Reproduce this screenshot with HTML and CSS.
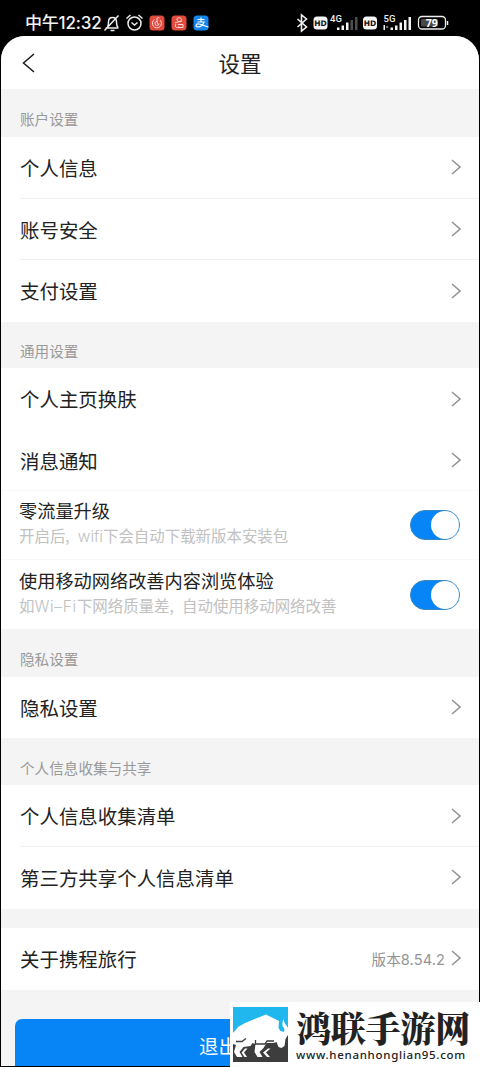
FILE: index.html
```html
<!DOCTYPE html>
<html lang="zh-CN">
<head>
<meta charset="utf-8">
<title>设置</title>
<link rel="stylesheet" href="styles.css">
</head>
<body>
<svg class="defs" width="0" height="0">
  <symbol id="chev" viewBox="0 0 10 16"><path d="M1 1l8 7-8 7" fill="none" stroke="#949494" stroke-width="1.6"/></symbol>
</svg>
<div class="phone">
  <div class="status">
    <span class="time">中午12:32</span>
    <svg class="icons-left" width="110" height="20" viewBox="0 0 110 20" fill="none">
      <g stroke="#eee" stroke-width="1.5">
        <path d="M2.500 15h13M4.500 14c1-2 1-3 1-5 0-3 1.500-4.500 4-4.500s4 1.500 4 4.500c0 2 0 4 1.500 5.500M7.500 17.500h4M1.500 17.500L15.500 2.500"/>
        <circle cx="31.500" cy="10.500" r="6.500"/>
        <path d="M28.500 9.500l3 2.500 3-2.500M23.500 5.500l4-3.500M39.500 5.500l-4-3.500"/>
      </g>
      <rect x="46.500" y="2.500" width="15" height="15" rx="3.500" fill="#e34a3e"/>
      <path d="M51.500 6.500a4.500 4.500 0 1 0 5.500.5M56.500 5c-2-1-3 0-2.500 2l.5 4M54.500 8.500a2 2 0 1 0 1.500 2" stroke="#f9d8d5"/>
      <rect x="68.500" y="2.500" width="15" height="15" rx="3.500" fill="#e34a3e"/>
      <path d="M74 5.500c2-1.500 5-.5 4.500 1.500s-4 2-4.500 0zM72 10c2-1 4-1 7-2M73 11c-2 3 1 5 3 2.500M75 11.500h5v3h-5" stroke="#f9d8d5"/>
      <rect x="90.500" y="2.500" width="15" height="15" rx="3.500" fill="#1685ec"/>
      <path d="M94.500 6.500h7M98 4.500v4.500M94.500 9h6.500c-1 3-3.500 5-6 5-3 0-2.500-3.500 1-3 3 .5 5 2 9.500 3" stroke="#fff" stroke-width="1.200"/>
    </svg>
    <svg class="icons-right" width="156" height="20" viewBox="0 0 156 20" fill="none">
      <path d="M1.500 6l9 8-5 4V2l5 4-9 8" stroke="#eee" stroke-width="1.600"/>
      <g fill="#f4f4f4">
        <rect x="17.500" y="3.500" width="14" height="13" rx="3.500"/>
        <rect x="67" y="3.500" width="14" height="13" rx="3.500"/>
        <path d="M41 14.500h2.500v2.500H41zM45.500 12.500H48V17h-2.500zM50 9.500h2.500V17H50z"/>
        <path d="M94.500 14.500H97V17h-2.500zM99 12.500h2.500V17H99zM103.500 9.500h2.500V17h-2.500zM108 7h2.500v10H108zM112.500 4h2.500v13h-2.500zM87.500 12H89v5h-1.500zM90.500 13l2 1-2 1z"/>
      </g>
      <path d="M54.500 7H57v10h-2.500zM59 4h2.500v13H59z" fill="#4e4e4e"/>
      <g class="hd"><text x="24.500" y="12.600">HD</text><text x="74" y="12.600">HD</text></g>
      <g class="net"><text x="34" y="8.500">4G</text><text x="87.500" y="8.500">5G</text></g>
      <rect x="122.500" y="3.500" width="27" height="12.500" rx="3.500" stroke="#eee" stroke-width="1.300"/>
      <rect x="125" y="6" width="17" height="7.500" rx="1" fill="#484848"/>
      <path d="M151.500 8v4" stroke="#eee" stroke-width="1.500"/>
      <text class="level" x="135.800" y="13.600">79</text>
    </svg>
  </div>
  <main class="screen">
    <header class="header">
      <svg class="back" width="14" height="20" viewBox="0 0 14 20"><path d="M13 1L2.500 10 13 19" fill="none" stroke="#1a1a1a" stroke-width="1.500"/></svg>
      <h1 class="title">设置</h1>
    </header>
    <h2 class="label">账户设置</h2>
    <section class="group">
      <div class="row line">个人信息<svg class="chev"><use href="#chev"/></svg></div>
      <div class="row line">账号安全<svg class="chev"><use href="#chev"/></svg></div>
      <div class="row">支付设置<svg class="chev"><use href="#chev"/></svg></div>
    </section>
    <h2 class="label label-short">通用设置</h2>
    <section class="group">
      <div class="row level-row">个人主页换肤<svg class="chev"><use href="#chev"/></svg></div>
      <div class="row level-row faint">消息通知<svg class="chev"><use href="#chev"/></svg></div>
      <div class="toggle-row faint">
        <div class="copy"><p class="name">零流量升级</p><p class="desc">开启后<span class="comma">,</span><span class="latin">wifi</span>下会自动下载新版本安装包</p></div>
        <span class="switch"><i class="knob"></i></span>
      </div>
      <div class="toggle-row">
        <div class="copy"><p class="name">使用移动网络改善内容浏览体验</p><p class="desc">如<span class="latin wide">Wi–Fi</span>下网络质量差<span class="comma">,</span>自动使用移动网络改善</p></div>
        <span class="switch"><i class="knob"></i></span>
      </div>
    </section>
    <h2 class="label">隐私设置</h2>
    <section class="group">
      <div class="row row-short">隐私设置<svg class="chev"><use href="#chev"/></svg></div>
    </section>
    <h2 class="label label-long">个人信息收集与共享</h2>
    <section class="group">
      <div class="row line">个人信息收集清单<svg class="chev"><use href="#chev"/></svg></div>
      <div class="row">第三方共享个人信息清单<svg class="chev"><use href="#chev"/></svg></div>
    </section>
    <section class="group about">
      <div class="row">关于携程旅行<span class="version">版本<span class="number">8.54.2</span></span><svg class="chev"><use href="#chev"/></svg></div>
    </section>
    <button class="logout">退出</button>
  </main>
  <aside class="brand">
    <svg class="logo" width="55" height="55" viewBox="0 0 55 55">
      <path fill="#20b7ef" d="M0 0h55v55H0z"/>
      <path fill="#3e3d3e" d="M0 29h55v26H0z"/>
      <path fill="#fff" d="M0 26L5 20l7-4L33 7.500 46 14l-.5 7 2 3 3.500 1 .5-3-2-3V15l1-3 1 4 3 4 1 3v4l-3 5-1 7-3 2-3-1-2-5-3 1h-7l-3 5-4 4 3 5h-5l-3-5 1-8-3-1-2 3-7 1-4 5 3 5H4l-3-5 2-7-3-1z"/>
      <path d="M3 34.500h6l4-3M22.500 33v4H32l2-3h7" fill="none" stroke="#3e3d3e" stroke-width="1.300"/>
      <path fill="#fff" d="M12 41.500h2.500l-3.500 4 3 4.500H11.500l-3-4.500zM35 41.500h2.500l-4.500 4 4 4.500h-3L30 45.500z"/>
    </svg>
    <div class="brand-text"><strong class="brand-name">鸿联手游网</strong><span class="brand-url">www.henanhonglian95.com</span></div>
  </aside>
</div>
</body>
</html>
```
FILE: styles.css
```css
* { box-sizing: border-box; }
body { margin: 0; background: #000; font-family: "Noto Sans CJK SC", sans-serif; color: #222; }
h1, h2, p { margin: 0; font-weight: 400; }
.defs { position: absolute; }
.phone { position: relative; width: 480px; height: 1067px; overflow: hidden; padding: 0 1px 1px; display: flex; flex-direction: column; }
.status { height: 36px; flex: none; padding: 13px 27px 0 24px; display: flex; color: #f2f2f2; }
.time { width: 78px; font: 500 17px/20px Inter, "Noto Sans CJK SC", sans-serif; letter-spacing: -.2px; white-space: nowrap; }
.icons-right { margin-left: auto; }
.hd { font: 700 7.500px "DejaVu Sans", sans-serif; fill: #111; text-anchor: middle; }
.net { font: 500 9.500px Roboto, sans-serif; fill: #eee; }
.level { font: 700 10.500px "Open Sans", sans-serif; fill: #fff; text-anchor: middle; }
.screen { flex: 1; min-height: 0; background: #f4f4f4; border-radius: 24px 24px 0 0; overflow: hidden; }
.header { height: 53px; background: #fff; display: flex; align-items: center; padding: 0 20px; }
.back { flex: none; }
.title { flex: 1; font-size: 21.500px; line-height: 30px; text-align: center; padding-right: 14px; }
.label { height: 48px; padding: 19px 19px 0; font-size: 14.600px; line-height: 21px; color: #999; }
.label-short { height: 46px; padding-top: 18px; }
.label-long { height: 47px; padding-top: 19px; }
.group { background: #fff; }
.row { height: 61.700px; display: flex; align-items: center; padding: 0 18px 1px 19px; font-size: 19.450px; }
.row-short { height: 61px; }
.level-row { padding-bottom: 0; }
.line { background: linear-gradient(#f1f1f1, #f1f1f1) 19px 100% / 100% 1px no-repeat; }
.faint { border-bottom: 1px solid #f8f8f8; }
.chev { width: 10px; height: 16px; margin-left: auto; flex: none; }
.toggle-row { height: 69px; display: flex; align-items: center; justify-content: space-between; padding: 0 19px 0 18px; }
.copy { padding-bottom: 3px; }
.name { font-size: 18.200px; line-height: 25px; }
.desc { font-size: 15.450px; line-height: 25px; color: #c1c1c1; white-space: nowrap; }
.latin { font-family: Inter, sans-serif; font-weight: 300; }
.wide { letter-spacing: .7px; }
.comma { display: inline-block; width: 12.500px; }
.switch { width: 50px; height: 30px; border-radius: 15px; background: #0785f7; border: 1px solid #3a87bd; display: flex; justify-content: flex-end; }
.knob { width: 28px; height: 28px; border-radius: 50%; background: #fff; }
.about { margin-top: 19px; }
.version { margin-left: auto; margin-right: 6px; font-size: 14.600px; color: #949494; }
.number { font-family: Inter, sans-serif; letter-spacing: .1px; }
.version + .chev { margin-left: 0; }
.logout { display: block; width: 450px; height: 54px; margin: 29px 14px 0; padding: 0 0 0 184px; border: 0; border-radius: 7px; background: #0785f7; color: #fff; text-align: left; font: 19.400px/54px "Noto Sans CJK SC", sans-serif; }
.brand { position: absolute; left: 230px; top: 1002px; width: 250px; height: 65px; background: #fff; display: flex; padding: 5px 0 0 3px; }
.logo { flex: none; }
.brand-text { margin-left: 8px; display: flex; flex-direction: column; white-space: nowrap; }
.brand-name { font: 900 35px/40px "Noto Serif CJK SC", "Noto Sans CJK SC", serif; letter-spacing: -.2px; color: #222; }
.brand-url { font: 500 11.500px/16px "Noto Sans", sans-serif; letter-spacing: .7px; color: #222; }
```
